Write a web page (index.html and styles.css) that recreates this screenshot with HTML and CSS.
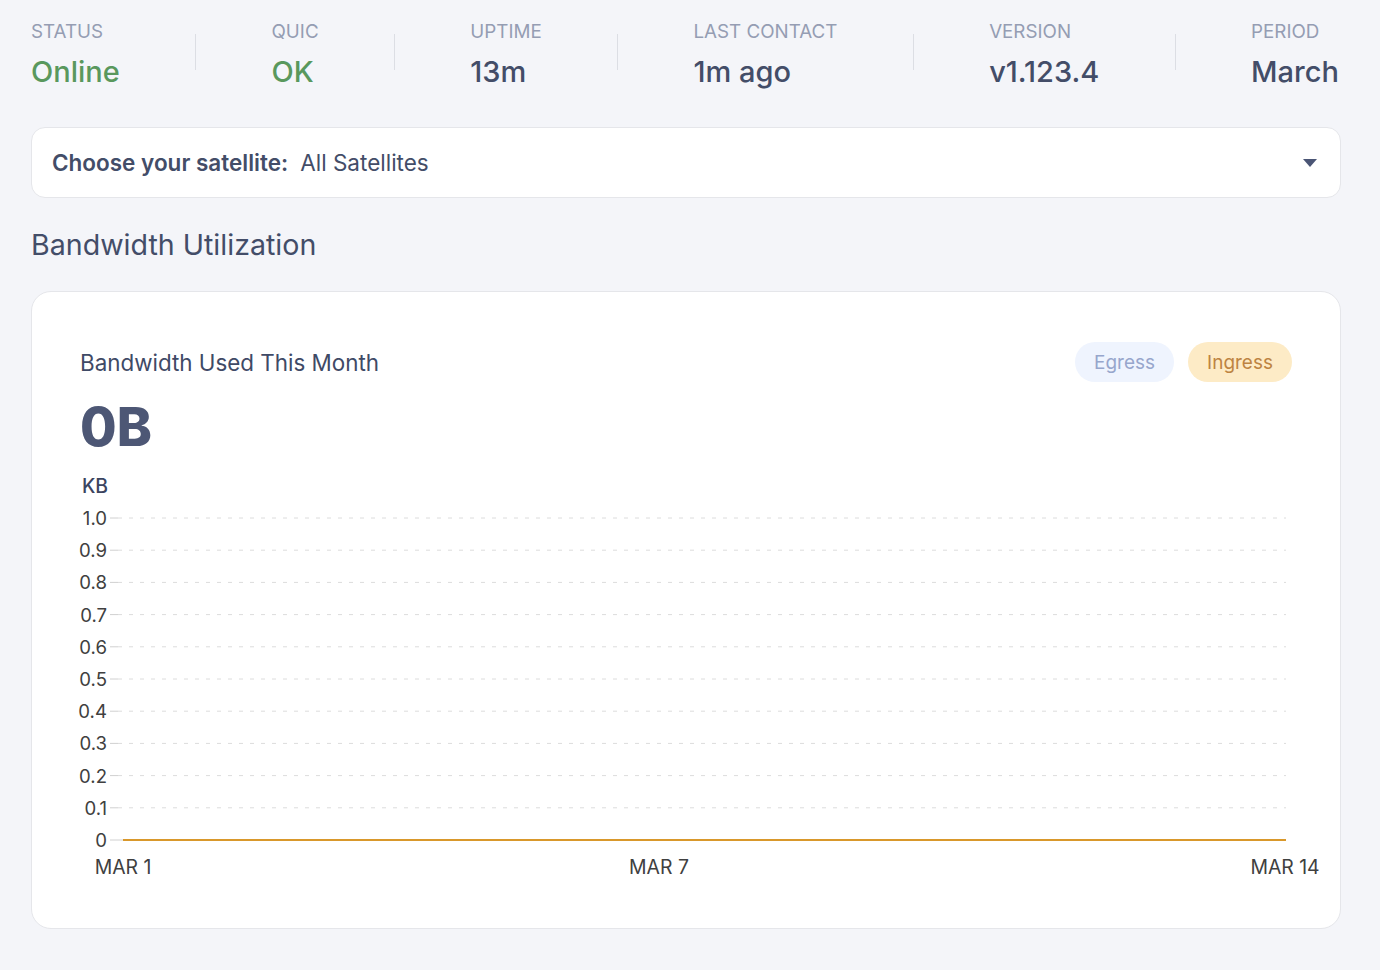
FILE: index.html
```html
<!DOCTYPE html>
<html lang="en">
<head>
<meta charset="utf-8">
<title>Node Dashboard</title>
<link rel="stylesheet" href="styles.css">
</head>
<body>
<main class="page">
  <section class="stats">
    <div class="stat">
      <div class="stat-label">Status</div>
      <div class="stat-value ok">Online</div>
    </div>
    <div class="divider"></div>
    <div class="stat">
      <div class="stat-label">QUIC</div>
      <div class="stat-value ok">OK</div>
    </div>
    <div class="divider"></div>
    <div class="stat">
      <div class="stat-label">Uptime</div>
      <div class="stat-value">13m</div>
    </div>
    <div class="divider"></div>
    <div class="stat">
      <div class="stat-label">Last Contact</div>
      <div class="stat-value">1m ago</div>
    </div>
    <div class="divider"></div>
    <div class="stat">
      <div class="stat-label">Version</div>
      <div class="stat-value">v1.123.4</div>
    </div>
    <div class="divider"></div>
    <div class="stat">
      <div class="stat-label">Period</div>
      <div class="stat-value">March</div>
    </div>
  </section>

  <div class="select">
    <span class="select-label">Choose your satellite:</span>
    <span class="select-value">All Satellites</span>
    <svg class="caret" width="14" height="8" viewBox="0 0 14 8"><path d="M0 0 H14 L7 8 Z"/></svg>
  </div>

  <h2 class="section-title">Bandwidth Utilization</h2>

  <section class="card">
    <div class="card-head">
      <h3 class="card-title">Bandwidth Used This Month</h3>
      <div class="pills">
        <span class="pill egress">Egress</span>
        <span class="pill ingress">Ingress</span>
      </div>
    </div>
    <div class="total">0B</div>
    <svg class="chart" width="1250" height="410" viewBox="0 0 1250 410">
      <text class="axis-unit" x="2" y="23">KB</text>
      <g class="grid">
        <line x1="38" y1="48" x2="1206" y2="48"/>
        <line x1="38" y1="80.2" x2="1206" y2="80.2"/>
        <line x1="38" y1="112.4" x2="1206" y2="112.4"/>
        <line x1="38" y1="144.6" x2="1206" y2="144.6"/>
        <line x1="38" y1="176.8" x2="1206" y2="176.8"/>
        <line x1="38" y1="209" x2="1206" y2="209"/>
        <line x1="38" y1="241.2" x2="1206" y2="241.2"/>
        <line x1="38" y1="273.4" x2="1206" y2="273.4"/>
        <line x1="38" y1="305.6" x2="1206" y2="305.6"/>
        <line x1="38" y1="337.8" x2="1206" y2="337.8"/>
      </g>
      <g class="ticks">
        <line x1="30" y1="48" x2="38" y2="48"/>
        <line x1="30" y1="80.2" x2="38" y2="80.2"/>
        <line x1="30" y1="112.4" x2="38" y2="112.4"/>
        <line x1="30" y1="144.6" x2="38" y2="144.6"/>
        <line x1="30" y1="176.8" x2="38" y2="176.8"/>
        <line x1="30" y1="209" x2="38" y2="209"/>
        <line x1="30" y1="241.2" x2="38" y2="241.2"/>
        <line x1="30" y1="273.4" x2="38" y2="273.4"/>
        <line x1="30" y1="305.6" x2="38" y2="305.6"/>
        <line x1="30" y1="337.8" x2="38" y2="337.8"/>
        <line x1="30" y1="370" x2="43" y2="370"/>
      </g>
      <g class="y-labels">
        <text x="27" y="55">1.0</text>
        <text x="27" y="87.2">0.9</text>
        <text x="27" y="119.4">0.8</text>
        <text x="27" y="151.6">0.7</text>
        <text x="27" y="183.8">0.6</text>
        <text x="27" y="216">0.5</text>
        <text x="27" y="248.2">0.4</text>
        <text x="27" y="280.4">0.3</text>
        <text x="27" y="312.6">0.2</text>
        <text x="27" y="344.8">0.1</text>
        <text x="27" y="377">0</text>
      </g>
      <line class="series ingress-line" x1="43" y1="370" x2="1206" y2="370"/>
      <g class="x-labels">
        <text x="43" y="404">MAR 1</text>
        <text x="579" y="404">MAR 7</text>
        <text x="1205" y="404">MAR 14</text>
      </g>
    </svg>
  </section>
</main>
</body>
</html>
```

FILE: styles.css
```css
* {
  box-sizing: border-box;
}

body {
  margin: 0;
  background: #f4f5f9;
  font-family: Inter, "Noto Sans", "Liberation Sans", sans-serif;
  color: #434d68;
}

.page {
  width: 1341px;
  padding: 21px 0 40px 31px;
}

/* status strip */
.stats {
  display: flex;
  justify-content: space-between;
  align-items: flex-start;
  margin-right: 2px;
}

.stat-label {
  font-size: 18.8px;
  line-height: 22px;
  text-transform: uppercase;
  color: #959db3;
}

.stat-value {
  margin-top: 12px;
  font-size: 29px;
  line-height: 34px;
  font-weight: 500;
  color: #434d68;
}

.stat-value.ok {
  color: #59985d;
}

.divider {
  width: 1px;
  height: 36px;
  margin-top: 13px;
  background: #dcdee4;
}

/* satellite selector */
.select {
  margin-top: 38px;
  height: 71px;
  display: flex;
  align-items: center;
  padding: 0 23px 0 20px;
  background: #fff;
  border: 1.5px solid #e5e6ea;
  border-radius: 14px;
  font-size: 22.5px;
}

.select-label {
  font-weight: 600;
  color: #434d68;
}

.select-value {
  margin-left: 12px;
  color: #434d68;
}

.caret {
  margin-left: auto;
  fill: #4a5575;
}

.section-title {
  margin: 30px 0 29px;
  font-size: 28.6px;
  line-height: 34px;
  font-weight: 400;
  color: #434d68;
}

/* bandwidth card */
.card {
  background: #fff;
  border: 1.5px solid #e5e6ea;
  border-radius: 20px;
  padding: 50px 48px 48px 48px;
}

.card-head {
  display: flex;
  justify-content: space-between;
  align-items: center;
  height: 40px;
}

.card-title {
  margin: 0;
  font-size: 22.4px;
  font-weight: 400;
  color: #3f4a66;
}

.pills {
  display: flex;
  gap: 14px;
}

.pill {
  height: 40px;
  padding: 0 19px;
  border-radius: 20px;
  display: flex;
  align-items: center;
  font-size: 19px;
}

.pill.egress {
  background: #eff4fe;
  color: #97a6cc;
}

.pill.ingress {
  background: #fdebc6;
  color: #bd8442;
}

.total {
  margin-top: 15px;
  font-size: 53px;
  line-height: 60px;
  font-weight: 800;
  color: #4d5775;
}

.chart {
  display: block;
  margin-top: 13px;
  overflow: visible;
}

.chart text {
  font-family: Inter, "Noto Sans", "Liberation Sans", sans-serif;
  font-size: 19.4px;
  fill: #404040;
}

.chart .y-labels text {
  font-size: 18.6px;
  text-anchor: end;
}

.chart .axis-unit {
  fill: #3b4460;
  font-weight: 500;
}

.x-labels text {
  text-anchor: middle;
}

.grid line {
  stroke: #dcdcdc;
  stroke-width: 1;
  stroke-dasharray: 4 7;
}

.ticks line {
  stroke: #d0d0d0;
  stroke-width: 1;
}

.ingress-line {
  stroke: #d9982b;
  stroke-width: 2;
}
```
